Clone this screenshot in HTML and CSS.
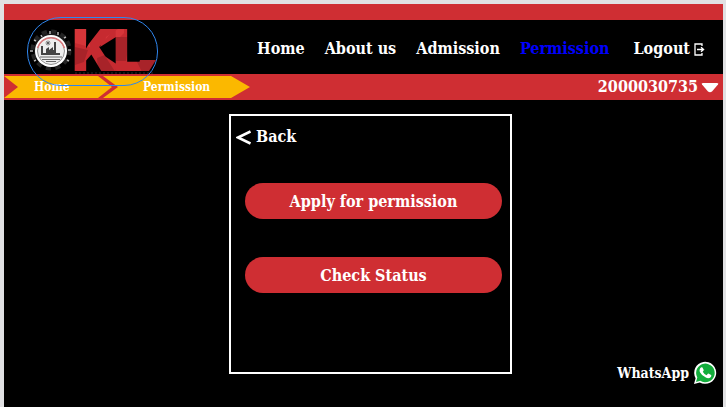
FILE: index.html
```html
<!DOCTYPE html>
<html lang="en">
<head>
<meta charset="utf-8">
<meta name="viewport" content="width=device-width, initial-scale=1">
<title>Permission</title>
<link rel="stylesheet" href="styles.css">
</head>
<body>
<div class="page">
  <header class="header">
    <div class="strip"></div>
    <nav class="nav">
      <a href="#">Home</a>
      <a href="#">About us</a>
      <a href="#">Admission</a>
      <a href="#" class="current">Permission</a>
      <a href="#" class="logout">Logout
        <svg width="11" height="13" viewBox="0 0 11 13" fill="none" stroke="#fff" stroke-width="1.3"><path d="M8 3V1H1v11h7v-2M3 6.500h6M7 4.200l2.600 2.300L7 8.800"/></svg>
      </a>
    </nav>
    <div class="bar">
      <div class="crumbs">
        <a href="#" class="crumb crumb-first">Home</a>
        <a href="#" class="crumb crumb-last">Permission</a>
      </div>
      <button class="account" type="button">2000030735
        <svg width="18" height="11" viewBox="0 0 18 11"><path d="M2 1h14q2 0 1 1.500L11 9.500q-2 1.500-4 0L1 2.500Q0 1 2 1z" fill="#fff"/></svg>
      </button>
    </div>
    <a href="#" class="logo" aria-label="KL home">
      <svg width="129" height="67" viewBox="28 18 129 67">
        <defs>
          <pattern id="facets" patternUnits="userSpaceOnUse" x="70" y="25" width="90" height="50">
            <path fill="#c62a30" d="M0 0h90v50H0z"/>
            <path fill="#d63539" d="M0 0h20v22L5 18zM36 12l18-12v8L34 28z"/>
            <path fill="#a82329" d="M5 22l13 3-4 12-9 3zM28 47l-1-14 10-4 10 18z"/>
            <path fill="#a82329" d="M46 12h14l-4 24H46zM66 35h24v6L72 47z"/>
          </pattern>
        </defs>
        <circle cx="51" cy="50" r="18" fill="none" stroke="#242424" stroke-width="5" stroke-dasharray="5 4.400"/>
        <circle cx="51" cy="50" r="17" fill="#1b1b1b"/>
        <path d="M41 35l1 2M50 31v3M58 32v3M64 38l2-1M68 50h3M67 60l2 1M36 41l-2-1M30 51h3M34 61l2-1" stroke="#b4b4b4" stroke-width="1.500"/>
        <circle cx="51" cy="51" r="16" fill="#fff"/>
        <circle cx="51" cy="51" r="13.500" fill="#eee" stroke="#777" stroke-width=".8"/>
        <path d="M37.500 48a14 14 0 0 1 27 0" fill="none" stroke="#d9797c" stroke-width="1.500"/>
        <path d="M41 55V46h2v7h3v-4l3-2v3l4-3v3h1v-8h2v11h4v2z" fill="#444"/>
        <path d="M48 40.500v5M45.500 43h5M46.300 41.300l3.400 3.400M49.700 41.300l-3.400 3.400" stroke="#555" stroke-width=".8"/>
        <path d="M40 57h22M42 59.500h18M46 61.500h10" stroke="#666" stroke-width="1"/>
        <path d="M106 29h18l-8 8-16 10z" fill="#c62a30"/>
        <path d="M100 53l27 18h-20z" fill="#c62a30"/>
        <path d="M140 60h16l-7 11h-12z" fill="#a82329"/>
        <g class="mark" fill="url(#facets)"><text x="72" y="71">K</text><text x="113" y="71">L</text></g>
        <path d="M75 73h79" stroke="#2b2b2b" stroke-width="1" stroke-dasharray="2 2"/>
      </svg>
    </a>
  </header>
  <main class="card">
    <a href="#" class="back">
      <svg width="15" height="15" viewBox="0 0 15 15"><path d="M14.500 1.500L2 7.500l12.500 6" fill="none" stroke="#fff" stroke-width="2.600"/></svg>
      Back
    </a>
    <div class="actions">
      <button type="button">Apply for permission</button>
      <button type="button">Check Status</button>
    </div>
  </main>
  <a href="#" class="chat">WhatsApp
    <svg width="24" height="24" viewBox="0 0 24 24"><path d="M1 23l1.600-5.800A11 11 0 1 1 6.800 21.400z" fill="#fff"/><path d="M3 21l1.300-4.500a9.300 9.300 0 1 1 3 3.200z" fill="#12ad3b"/><path d="M7.200 7.300q1.300-1.600 2.300-.7l1.200 2.500q.2.600-.9 1.700 1.300 2.500 3.800 3.500l1.300-1.500q.4-.4 1 0l2.200 1.200q.6.400-.2 1.900-1.900 1.900-4.700.9-4.300-1.700-6.400-5.800-.7-2 .4-3.700z" fill="#fff"/></svg>
  </a>
</div>
</body>
</html>
```
FILE: styles.css
```css
* { box-sizing: border-box; }

body {
  margin: 0;
  background: #e1e1e3;
  color: #fff;
  font: bold 16px/20px "DejaVu Serif Condensed", "Noto Serif", "Liberation Serif", serif;
}

a { color: inherit; text-decoration: none; }
button { border: 0; color: inherit; font: inherit; cursor: pointer; }
svg { display: block; flex: none; }

.page {
  position: relative;
  min-height: calc(100vh - 4px);
  margin: 4px 3px 0 4px;
  padding-bottom: 33px;
  background: #000;
}

.header { position: relative; }
.strip { height: 16px; background: #cf2e33; }

.nav {
  display: flex;
  align-items: center;
  justify-content: flex-end;
  gap: 20px;
  height: 54px;
  padding: 4px 18px 0 0;
  white-space: nowrap;
}
.current { color: #0000fe; }
.logout { display: flex; align-items: center; gap: 4px; padding-left: 4px; }

.bar {
  display: flex;
  align-items: center;
  justify-content: space-between;
  height: 26px;
  background: #cf2e33;
}
.crumbs { display: flex; }
.crumb {
  height: 22px;
  background: #fbb800;
  font-size: 12px;
  line-height: 22px;
}
.crumb-first {
  width: 108px;
  padding-left: 30px;
  clip-path: polygon(0 0, 94px 0, 100% 50%, 94px 100%, 0 100%, 14px 50%);
}
.crumb-last {
  width: 147px;
  margin-left: -9px;
  padding-left: 40px;
  clip-path: polygon(0 0, 128px 0, 100% 50%, 128px 100%, 0 100%, 15px 50%);
}
.account {
  display: flex;
  align-items: center;
  gap: 3px;
  padding: 0 4px 0 0;
  background: none;
}

.logo {
  position: absolute;
  top: 13px;
  left: 23px;
  border: 1px solid #2f86ee;
  border-radius: 34px;
}
.mark { font: 900 58px Inter, sans-serif; }

.card {
  width: 283px;
  min-height: 260px;
  margin: 14px auto 0 225px;
  padding: 11px 8px 16px 5px;
  border: 2px solid #fff;
}
.back { display: flex; align-items: center; gap: 5px; }
.actions {
  display: grid;
  gap: 38px;
  margin: 36px 0 0 9px;
}
.actions button {
  height: 36px;
  padding: 2px 0 0;
  border-radius: 18px;
  background: #cf2e33;
}

.chat {
  position: absolute;
  right: 6px;
  bottom: 22px;
  display: flex;
  align-items: center;
  gap: 4px;
  font-size: 14px;
}
```
